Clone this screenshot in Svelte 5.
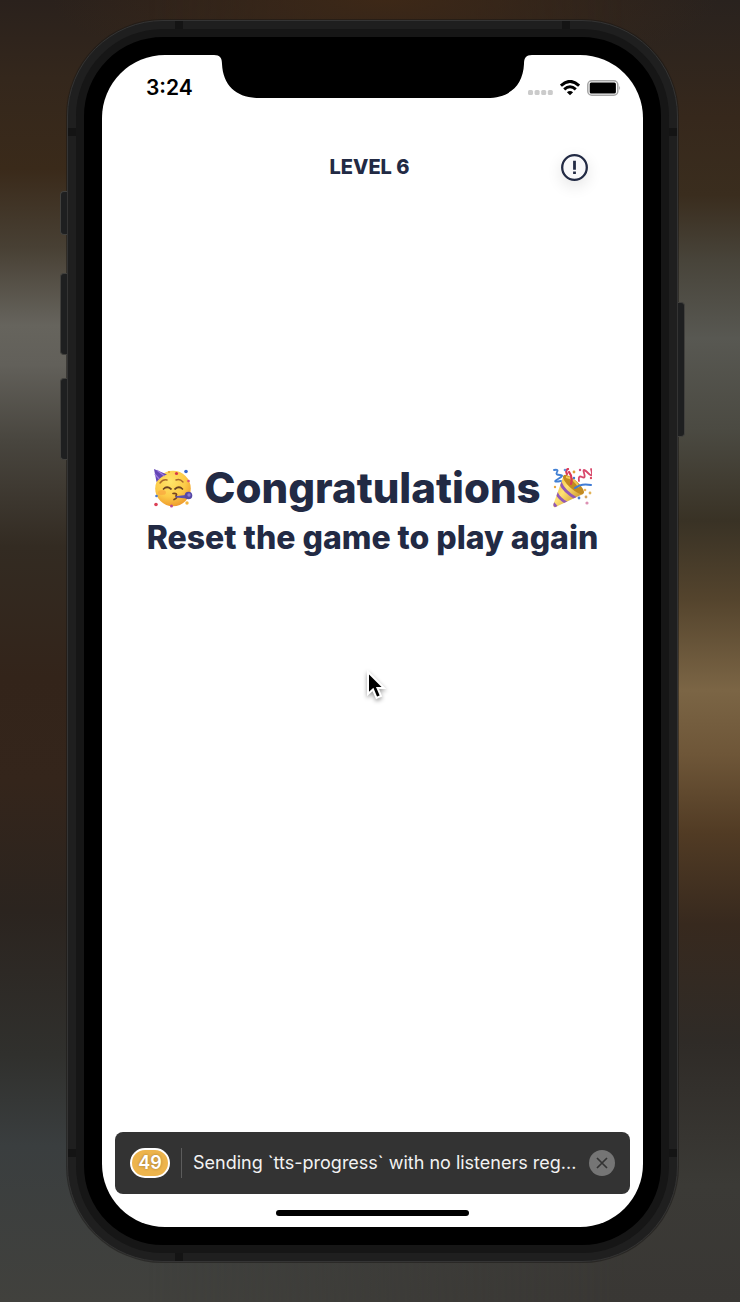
<script>
  const level = 6;
  const logCount = 49;
  let toastOpen = $state(true);
</script>

{#snippet partyFace()}
  <svg class="emoji" viewBox="0 0 40 40" role="img" aria-label="Partying face">
    <defs>
      <radialGradient id="skin" cx="0.42" cy="0.3" r="0.72">
        <stop offset="0" stop-color="#ffe56a" />
        <stop offset="0.6" stop-color="#fccb48" />
        <stop offset="1" stop-color="#ee9a2c" />
      </radialGradient>
    </defs>
    <circle cx="20" cy="20.5" r="17.8" fill="url(#skin)" />
    <path d="M1 1 14 6.5Q8 8 3.5 14Z" fill="#6547b5" />
    <path d="M4 2.3 11.5 8M1.8 6 6.3 11.2" stroke="#a07be0" stroke-width="1.2" />
    <path d="M7 15q3-4 7-3M23 12q4-1.500 7 2" fill="none" stroke="#a9692a" stroke-width="1.4" stroke-linecap="round" />
    <path d="M10.500 21q3.500-3.500 7.500 0M22 21q4-3.500 7.500 0" fill="none" stroke="#6b4222" stroke-width="1.7" stroke-linecap="round" />
    <ellipse cx="9" cy="24.500" rx="4" ry="2.500" fill="#f79a3d" opacity=".55" />
    <path d="M20 25.500q5-.5 3 2.500 2 2-2 3.500" fill="none" stroke="#754320" stroke-width="1.7" stroke-linecap="round" />
    <path d="M22 28.200 33 27l1 3.500-11-1Z" fill="#5c4fae" />
    <circle cx="35.500" cy="27.500" r="3.800" fill="#5548a5" />
    <circle cx="36" cy="27" r="1.700" fill="#8d7bd2" />
    <circle cx="23.500" cy="5.500" r="1.600" fill="#d9364b" />
    <circle cx="33" cy="3.500" r="1.800" fill="#3766cc" />
    <circle cx="35.500" cy="13" r="1.300" fill="#d84e75" />
    <circle cx="3" cy="36.500" r="1.800" fill="#dc4056" />
    <circle cx="3.500" cy="28" r="1.300" fill="#4979d1" />
    <circle cx="18.500" cy="38" r="1.500" fill="#ba4a8c" />
    <circle cx="34" cy="35" r="1.700" fill="#f3b640" />
    <circle cx="16" cy="4" r="1.100" fill="#e8a432" />
  </svg>
{/snippet}

{#snippet popper()}
  <svg class="emoji" viewBox="0 0 40 40" role="img" aria-label="Party popper">
    <defs>
      <linearGradient id="cone" x1="0" y1="0" x2="1" y2="0.8">
        <stop offset="0" stop-color="#e9b52c" />
        <stop offset="0.45" stop-color="#ffe273" />
        <stop offset="1" stop-color="#c48a1c" />
      </linearGradient>
      <clipPath id="coneShape"><path d="M11.500 8 31 26 3.500 39Q.5 40 1.500 36Z" /></clipPath>
    </defs>
    <path d="M11.500 8 31 26 3.500 39Q.5 40 1.500 36Z" fill="url(#cone)" />
    <g clip-path="url(#coneShape)" fill="none" stroke="#9159b5" stroke-width="3">
      <path d="M8 14q4 10 17 17M4 24q3 7 11 11M0 34q3 3 6 7" />
    </g>
    <ellipse cx="21.500" cy="16.500" rx="13.500" ry="4.500" transform="rotate(42 21.500 16.500)" fill="#c28a20" />
    <path d="M14 9q8 1 13 10" fill="none" stroke="#f4ca50" stroke-width="2" />
    <path d="M19 16q2-7-2-12M15 6q-2-4 1-5" fill="none" stroke="#da3857" stroke-width="2.200" stroke-linecap="round" />
    <path d="M23 20q6-5 16-3" fill="none" stroke="#3f7bd5" stroke-width="2" stroke-linecap="round" />
    <path d="M2 2q5-1 3 2t3 3-2 4 3 2" fill="none" stroke="#4381d4" stroke-width="1.800" stroke-linecap="round" />
    <path d="M27 13q-1-6 3-4t2-4 4 0 3-4" fill="none" stroke="#d8486b" stroke-width="1.800" stroke-linecap="round" />
    <g>
      <circle cx="13" cy="2" r="1.300" fill="#6690da" />
      <circle cx="22" cy="4" r="1.400" fill="#e1a13b" />
      <circle cx="28" cy="2" r="1.200" fill="#d84c7d" />
      <circle cx="22" cy="10" r="1.200" fill="#4477cf" />
      <circle cx="3" cy="19" r="1.200" fill="#e8a53c" />
      <circle cx="33" cy="22" r="1.300" fill="#efb85a" />
      <circle cx="38" cy="25" r="1.400" fill="#e2b45a" />
      <circle cx="27" cy="30" r="1.400" fill="#4b7bd0" />
      <circle cx="34" cy="29" r="1.400" fill="#d5a660" />
      <circle cx="35" cy="35" r="1.600" fill="#dc91b3" />
      <circle cx="39" cy="10" r="1.200" fill="#dc4a60" />
    </g>
  </svg>
{/snippet}

<div class="desktop">
  <div class="phone">
    <i class="key mute"></i>
    <i class="key up"></i>
    <i class="key down"></i>
    <i class="key power"></i>
    <i class="band top start"></i>
    <i class="band top end"></i>
    <i class="band bottom start"></i>
    <i class="band side left high"></i>
    <i class="band side right high"></i>
    <i class="band side left low"></i>
    <i class="band side right low"></i>

    <div class="bezel">
      <div class="screen">
        <div class="status">
          <time>3:24</time>
          <svg class="notch" viewBox="0 0 302 44" aria-hidden="true">
            <path d="M-8-1H310V0C304 0 302 3 302 9 301 31 287 43 265 43H37C15 43 1 31 0 9 0 3-2 0-8 0Z" />
          </svg>
          <div class="indicators">
            <svg width="25" height="16" viewBox="0 0 25 16" fill="#cbcbcb" aria-label="No signal" role="img">
              <rect x="0" y="10" width="5" height="5" rx="1.500" /><rect x="6.600" y="10" width="5" height="5" rx="1.500" />
              <rect x="13.200" y="10" width="5" height="5" rx="1.500" /><rect x="19.800" y="10" width="5" height="5" rx="1.500" />
            </svg>
            <svg width="20" height="16" viewBox="0 0 20 16" fill="none" stroke="#000" aria-label="Wi-Fi" role="img">
              <path d="M.9 5.600Q10-2.800 19.100 5.600M4.200 9.300Q10 4.200 15.800 9.300" stroke-width="3" />
              <path d="M10 15.300 6.900 12.300Q10 9.600 13.100 12.300Z" fill="#000" stroke="none" />
            </svg>
            <svg width="34" height="16" viewBox="0 0 34 16" aria-label="Battery full" role="img">
              <rect x=".8" y=".8" width="30" height="14.400" rx="4" fill="none" stroke="#a5a5a5" stroke-width="1.500" />
              <rect x="2.700" y="2.500" width="26.200" height="11" rx="1.500" />
              <path d="M32.300 5.500q1.700 2.500 0 5Z" fill="#999" />
            </svg>
          </div>
        </div>

        <header>
          <h3>LEVEL {level}</h3>
          <button class="info" aria-label="Game info">
            <svg width="27" height="27" viewBox="0 0 27 27" fill="none" stroke="#222a44">
              <circle cx="13.500" cy="13.500" r="12.300" stroke-width="2.300" />
              <path d="M13.500 6.700v9M13.500 17.600v2.300" stroke-width="2.800" />
            </svg>
          </button>
        </header>

        <main>
          <h1>{@render partyFace()}<span>Congratulations</span>{@render popper()}</h1>
          <h2>Reset the game to play again</h2>
        </main>

        {#if toastOpen}
          <div class="toast" role="status">
            <span class="count">{logCount}</span>
            <span class="rule"></span>
            <p>Sending `tts-progress` with no listeners reg...</p>
            <button class="close" aria-label="Dismiss" onclick={() => (toastOpen = false)}>
              <svg width="12" height="12" viewBox="0 0 12 12" stroke="#333" stroke-width="1.700">
                <path d="M1 1 11 11M11 1 1 11" />
              </svg>
            </button>
          </div>
        {/if}
        <div class="home"></div>

        <svg class="pointer" width="24" height="34" viewBox="0 0 24 34" aria-hidden="true">
          <path d="M3 2V24L8 19.500 11.500 28 16 26 12.500 18H19Z" fill="#000" stroke="#fff" stroke-width="2" />
        </svg>
      </div>
    </div>
  </div>
</div>

<style>
  :global(body) { margin: 0; }
  * { box-sizing: border-box; }

  .desktop {
    position: relative;
    isolation: isolate;
    display: flex;
    min-height: 100vh;
    padding: 20px 62px 40px 67px;
    font-family: Inter, "Liberation Sans", sans-serif;
    background: linear-gradient(#2a211c, #34271c 6%, #3a2a1a 13%, #484034 19%, #66645d 25%, #62605a 28%, #48453e 34%, #332b22 42%, #33241a 52%, #34251b 60%, #2b241f 70%, #30302d 81%, #3a3e3f 88%, #41413d);
  }
  .desktop::before, .desktop::after {
    content: "";
    position: absolute;
    inset: 0;
    z-index: -1;
  }
  .desktop::before {
    background: linear-gradient(#29221e, #36281c 9%, #3a2d1e 15%, #48443a 20%, #585852 26%, #4b4a42 33%, #393225 40%, #54442d 46%, #7b6545 53%, #6e5638 58%, #513b24 64%, #37291e 71%, #2f2b27 80%, #3b3a36 91%, #393734);
    mask-image: linear-gradient(90deg, transparent 20%, #000 85%);
  }
  .desktop::after {
    background: radial-gradient(ellipse 45% 6% at 52% 0, #3d2817, transparent);
  }

  .phone {
    position: relative;
    display: flex;
    flex: 1;
    padding: 8px;
    border: 1px solid #343434;
    border-radius: 96px;
    background: #1f1f1f;
    box-shadow: 0 0 0 1px #17151380;
  }
  .bezel {
    display: flex;
    flex: 1;
    padding: 18px;
    border: 8px solid #161616;
    border-radius: 87px;
    background: #000;
  }
  .screen {
    position: relative;
    display: flex;
    flex: 1;
    flex-direction: column;
    overflow: hidden;
    border-radius: 63px;
    background: #fff;
  }

  .key {
    position: absolute;
    left: -8px;
    width: 7px;
    border: 1px solid #41403d;
    border-right: 0;
    border-radius: 4px 0 0 4px;
    background: #1e1f20;
  }
  .mute { top: 170px; height: 44px; }
  .up { top: 252px; height: 82px; }
  .down { top: 357px; height: 82px; }
  .power {
    top: 281px;
    right: -8px;
    left: auto;
    height: 135px;
    border: 1px solid #41403d;
    border-left: 0;
    border-radius: 0 4px 4px 0;
  }
  .band { position: absolute; width: 8px; height: 8px; background: #141414; }
  .top { top: 0; }
  .bottom { bottom: 0; }
  .start { left: 107px; }
  .end { right: 107px; }
  .left { left: 0; }
  .right { right: 0; }
  .high { top: 107px; }
  .low { bottom: 104px; }

  .status { display: grid; grid-template-columns: 1fr 302px 1fr; }
  time { padding: 20px 0 0 44px; font-size: 21px; line-height: 26px; font-weight: 600; }
  .notch { width: 302px; height: 44px; overflow: visible; }
  .indicators {
    display: flex;
    justify-content: flex-end;
    gap: 7px;
    padding: 25px 22px 0 0;
  }

  header {
    display: grid;
    grid-template-columns: 1fr auto 1fr;
    align-items: center;
    margin-top: 52px;
    padding: 0 55px 0 49px;
    color: #222a44;
  }
  h1, h2, h3, p { margin: 0; }
  h3 { grid-column: 2; font-size: 20px; line-height: 28px; font-weight: 800; }
  button { display: grid; place-items: center; padding: 0; border: 0; border-radius: 50%; }
  .info {
    justify-self: end;
    width: 27px;
    height: 27px;
    background: #f8f8fa;
    box-shadow: 0 5px 16px #0000001c;
  }

  main {
    flex: 1;
    padding-top: 282px;
    color: #222a44;
    text-align: center;
    white-space: nowrap;
  }
  h1 {
    display: flex;
    align-items: center;
    justify-content: center;
    gap: 11px;
    font-size: 42px;
    line-height: 50px;
    font-weight: 800;
  }
  h2 { font-size: 32px; line-height: 50px; font-weight: 800; }
  .emoji { width: 40px; height: 40px; }

  .toast {
    display: flex;
    align-items: center;
    height: 62px;
    margin: 0 13px;
    padding: 0 15px;
    border-radius: 8px;
    background: #333;
    color: #f2f2f2;
  }
  .count {
    width: 40px;
    border: 2px solid #fff;
    border-radius: 15px;
    background: #edb44c;
    color: #fff;
    font-size: 18px;
    line-height: 26px;
    font-weight: 600;
    text-align: center;
    text-shadow: 0 0 3px #0005;
  }
  .rule { width: 1px; height: 30px; margin: 0 11px; background: #5c5c5c; }
  .toast p { flex: 1; overflow: hidden; font-size: 18px; line-height: 26px; white-space: nowrap; }
  .close { width: 26px; height: 26px; background: #757575; }
  .home {
    align-self: center;
    width: 193px;
    height: 6px;
    margin: 16px 0 11px;
    border-radius: 3px;
    background: #000;
  }
  .pointer {
    position: absolute;
    top: 615px;
    left: 263px;
    filter: drop-shadow(0 2px 2px #0006);
  }
</style>
